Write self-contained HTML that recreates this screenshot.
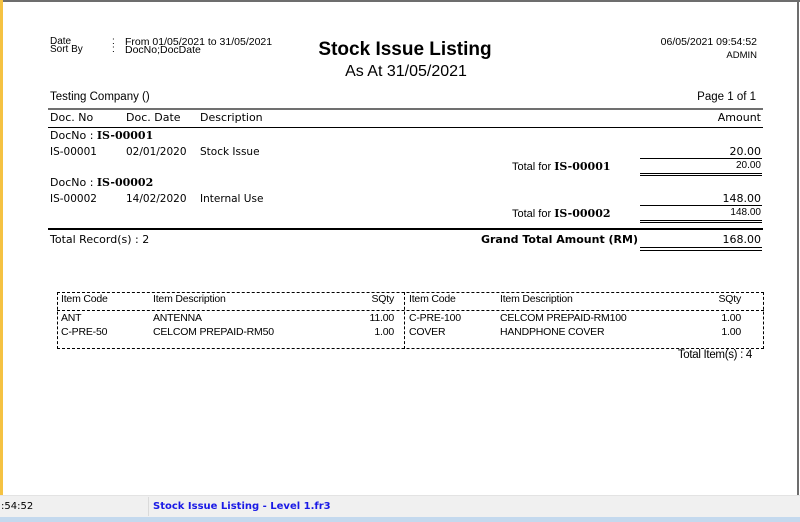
<!DOCTYPE html>
<html><head><meta charset="utf-8"><style>
*{margin:0;padding:0;box-sizing:border-box}
body{width:800px;height:522px;background:#fff;position:relative;overflow:hidden;font-family:"DejaVu Sans","Liberation Sans",sans-serif;color:#000}
.a{position:absolute;white-space:nowrap;line-height:1}
.s{font-family:"Liberation Sans",sans-serif;font-size:10px}
.t{font-family:"Liberation Sans",sans-serif;font-size:10.5px;letter-spacing:-0.2px}
.m{font-size:11px}
.r{text-align:right}
.b{font-weight:bold}
.hl{position:absolute;background:#000}
.bx{position:absolute;border:1px dashed #000}
</style></head><body>
<div style="position:absolute;left:0;top:0;width:3px;height:495px;background:#f5c242"></div>
<div style="position:absolute;left:3px;top:0;width:797px;height:2px;background:#6d6d6d"></div>
<div style="position:absolute;left:797px;top:0;width:2px;height:495px;background:#6d6d6d"></div>

<div class="a s" style="left:50px;top:37px">Date</div>
<div class="a s" style="left:50px;top:45px">Sort By</div>
<div class="a s" style="left:112px;top:37px">:</div>
<div class="a s" style="left:112px;top:45px">:</div>
<div class="a s" style="left:125px;top:37px;font-size:10.5px">From 01/05/2021 to 31/05/2021</div>
<div class="a s" style="left:125px;top:45px;font-size:10.5px">DocNo;DocDate</div>

<div class="a b" style="left:305px;width:200px;top:40px;font-size:19px;text-align:center;font-family:'Liberation Sans',sans-serif">Stock Issue Listing</div>
<div class="a" style="left:305px;width:202px;top:64px;font-size:16px;text-align:center;font-family:'Liberation Sans',sans-serif">As At 31/05/2021</div>

<div class="a s r" style="right:43px;top:37px;font-size:10.5px">06/05/2021 09:54:52</div>
<div class="a s r" style="right:43px;top:51px;font-size:9.5px">ADMIN</div>

<div class="a" style="left:50px;top:92px;font-size:11.5px;font-family:'Liberation Sans',sans-serif">Testing Company ()</div>
<div class="a r" style="right:44px;top:92px;font-size:11.5px;font-family:'Liberation Sans',sans-serif">Page 1 of 1</div>
<div class="hl" style="left:48px;top:108px;width:715px;height:2px;background:#707070"></div>

<div class="a m" style="left:50px;top:112px">Doc. No</div>
<div class="a m" style="left:126px;top:112px">Doc. Date</div>
<div class="a m" style="left:200px;top:112px">Description</div>
<div class="a m r" style="right:39px;top:112px">Amount</div>
<div class="hl" style="left:48px;top:127px;width:715px;height:1px"></div>

<div class="a m" style="left:50px;top:130px">DocNo : <b style="font-family:'DejaVu Serif','Liberation Serif',serif">IS-00001</b></div>
<div class="a" style="left:50px;top:147px;font-size:10.5px">IS-00001</div>
<div class="a" style="left:126px;top:147px;font-size:10.5px">02/01/2020</div>
<div class="a" style="left:200px;top:147px;font-size:10.5px">Stock Issue</div>
<div class="a m r" style="right:39px;top:146px">20.00</div>
<div class="hl" style="left:640px;top:158px;width:122px;height:1px"></div>
<div class="a" style="left:512px;top:161px;font-size:11px;font-family:'Liberation Sans',sans-serif">Total for <b style="font-family:'DejaVu Serif','Liberation Serif',serif">IS-00001</b></div>
<div class="a s r" style="right:39px;top:161px">20.00</div>
<div class="hl" style="left:640px;top:173px;width:122px;height:1px"></div>
<div class="hl" style="left:640px;top:175px;width:122px;height:1px"></div>

<div class="a m" style="left:50px;top:177px">DocNo : <b style="font-family:'DejaVu Serif','Liberation Serif',serif">IS-00002</b></div>
<div class="a" style="left:50px;top:194px;font-size:10.5px">IS-00002</div>
<div class="a" style="left:126px;top:194px;font-size:10.5px">14/02/2020</div>
<div class="a" style="left:200px;top:194px;font-size:10.5px">Internal Use</div>
<div class="a m r" style="right:39px;top:193px">148.00</div>
<div class="hl" style="left:640px;top:205px;width:122px;height:1px"></div>
<div class="a" style="left:512px;top:208px;font-size:11px;font-family:'Liberation Sans',sans-serif">Total for <b style="font-family:'DejaVu Serif','Liberation Serif',serif">IS-00002</b></div>
<div class="a s r" style="right:39px;top:208px">148.00</div>
<div class="hl" style="left:640px;top:220px;width:122px;height:1px"></div>
<div class="hl" style="left:640px;top:222px;width:122px;height:1px"></div>

<div class="hl" style="left:48px;top:228px;width:715px;height:2px"></div>
<div class="a m" style="left:50px;top:234px">Total Record(s) : 2</div>
<div class="a m b r" style="right:162px;top:234px">Grand Total Amount (RM)</div>
<div class="a m r" style="right:39px;top:234px">168.00</div>
<div class="hl" style="left:640px;top:247px;width:122px;height:1px"></div>
<div class="hl" style="left:640px;top:250px;width:122px;height:1px"></div>

<div class="bx" style="left:57px;top:292px;width:707px;height:57px"></div>
<div style="position:absolute;left:57px;top:310px;width:707px;border-top:1px dashed #000"></div>
<div style="position:absolute;left:404px;top:292px;height:57px;border-left:1px dashed #000"></div>
<div class="a t" style="left:61px;top:294px">Item Code</div>
<div class="a t" style="left:153px;top:294px">Item Description</div>
<div class="a t r" style="right:406px;top:294px">SQty</div>
<div class="a t" style="left:409px;top:294px">Item Code</div>
<div class="a t" style="left:500px;top:294px">Item Description</div>
<div class="a t r" style="right:59px;top:294px">SQty</div>

<div class="a t" style="left:61px;top:313px">ANT</div>
<div class="a t" style="left:153px;top:313px">ANTENNA</div>
<div class="a t r" style="right:406px;top:313px">11.00</div>
<div class="a t" style="left:409px;top:313px">C-PRE-100</div>
<div class="a t" style="left:500px;top:313px">CELCOM PREPAID-RM100</div>
<div class="a t r" style="right:59px;top:313px">1.00</div>

<div class="a t" style="left:61px;top:327px">C-PRE-50</div>
<div class="a t" style="left:153px;top:327px">CELCOM PREPAID-RM50</div>
<div class="a t r" style="right:406px;top:327px">1.00</div>
<div class="a t" style="left:409px;top:327px">COVER</div>
<div class="a t" style="left:500px;top:327px">HANDPHONE COVER</div>
<div class="a t r" style="right:59px;top:327px">1.00</div>

<div class="a r" style="right:48px;top:350px;font-size:11.5px;font-family:'Liberation Sans',sans-serif;letter-spacing:-0.3px">Total Item(s) : 4</div>

<div style="position:absolute;left:0;top:495px;width:800px;height:22px;background:#f0f0f0;border-top:1px solid #e3e3e3"></div>
<div style="position:absolute;left:148px;top:497px;width:1px;height:19px;background:#dadada"></div>
<div class="a" style="left:1px;top:502px;font-size:10px;font-family:'DejaVu Sans',sans-serif">:54:52</div>
<div class="a b" style="left:153px;top:502px;font-size:10px;color:#1a1ae6;font-family:'DejaVu Sans',sans-serif">Stock Issue Listing - Level 1.fr3</div>
<div style="position:absolute;left:0;top:517px;width:800px;height:5px;background:#c4d9ee"></div>
</body></html>
